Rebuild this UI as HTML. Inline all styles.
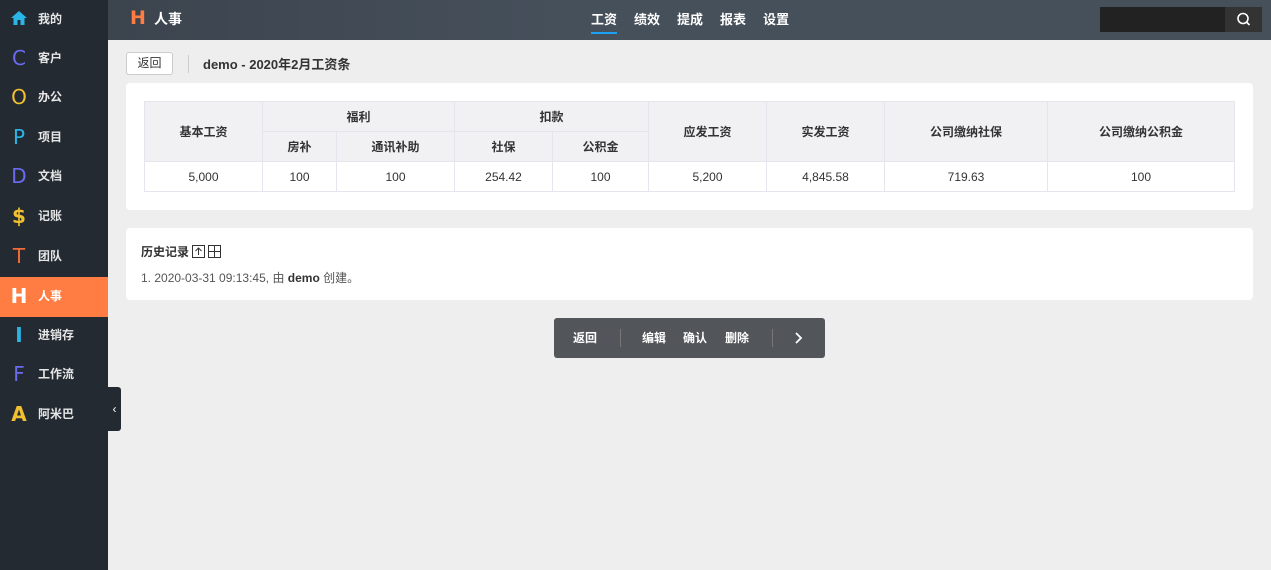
<!DOCTYPE html>
<html><head><meta charset="utf-8"><style>
*{box-sizing:border-box;margin:0;padding:0}
body{width:1271px;height:570px;overflow:hidden;background:#eeeeee;font-family:"Liberation Sans","Noto Sans CJK SC",sans-serif;font-size:12px;color:#333;position:relative}
.side{position:absolute;left:0;top:0;width:108px;height:570px;background:#232a32}
.it{position:absolute;left:0;width:108px;height:40px;display:flex;align-items:center;color:#e6e6e6;font-weight:bold;font-size:12px;padding-bottom:3px}
.it .ic{width:38px;text-align:center;font-size:20px;font-weight:normal;font-family:"DejaVu Sans","Liberation Sans",sans-serif}
.it.act{background:#ff7d42;color:#fff}
.tab{position:absolute;left:108px;top:387px;width:13px;height:44px;background:#232a32;border-radius:0 3px 3px 0;color:#fff;font-size:12px;text-align:center;line-height:44px}
.top{position:absolute;left:108px;top:0;width:1163px;height:40px;background:linear-gradient(90deg,#3c444e,#46505b 40%,#46505b)}
.logo{position:absolute;left:22px;top:7px;color:#ff7d42;font-size:19px;font-family:"DejaVu Sans",sans-serif;font-weight:bold}
.ltxt{position:absolute;left:46px;top:9px;color:#fff;font-size:14px;font-weight:bold}
.nav{position:absolute;left:483px;top:9px;color:#fff;font-weight:bold;font-size:13px}
.nav span{margin-right:17px;display:inline-block;position:relative}
.nav span.on:after{content:"";position:absolute;left:0;right:0;top:23px;height:2px;background:#1da1f2}
.srch{position:absolute;left:992px;top:7px;width:162px;height:25px;background:#222}
.sbtn{position:absolute;left:1117px;top:7px;width:37px;height:25px;background:#333}
.card{position:absolute;left:126px;width:1127px;background:#fff;border-radius:4px}
table{border-collapse:collapse;position:absolute;left:18px;top:18px;width:1091px;font-size:12px}
td,th{border:1px solid #e5e5ee;text-align:center;height:30px}
th{background:#f1f1f4;font-weight:bold;color:#333}
.bar{position:absolute;left:554px;top:318px;width:271px;height:40px;background:#52565b;border-radius:3px;color:#fff;font-weight:bold;font-size:12px}
.bar span{position:absolute;top:11px}
.sep{position:absolute;top:11px;width:1px;height:18px;background:#777}
</style></head><body>
<div class="side">
<div class="it" style="top:0"><span class="ic" style="color:#2bb5e6"><svg width="18" height="16" viewBox="0 0 18 16"><path d="M9 1L1 8h2.5v7h4v-5h3v5h4V8H17z" fill="#2bb5e6"/></svg></span>我的</div>
<div class="it" style="top:39px"><span class="ic" style="color:#6b6bf0">C</span>客户</div>
<div class="it" style="top:78px"><span class="ic" style="color:#f0c030">O</span>办公</div>
<div class="it" style="top:118px"><span class="ic" style="color:#2bb5e6">P</span>项目</div>
<div class="it" style="top:157px"><span class="ic" style="color:#6b6bf0">D</span>文档</div>
<div class="it" style="top:197px"><span class="ic" style="color:#f0c030;font-weight:bold">$</span>记账</div>
<div class="it" style="top:237px"><span class="ic" style="color:#f06a3a">T</span>团队</div>
<div class="it act" style="top:277px"><span class="ic" style="color:#fff;font-weight:bold">H</span>人事</div>
<div class="it" style="top:316px"><span class="ic" style="color:#2bb5e6;font-weight:bold">I</span>进销存</div>
<div class="it" style="top:355px"><span class="ic" style="color:#6b6bf0">F</span>工作流</div>
<div class="it" style="top:395px"><span class="ic" style="color:#f0c030;font-weight:bold">A</span>阿米巴</div>
</div>
<div class="tab">‹</div>
<div class="top">
<div class="logo">H</div><div class="ltxt">人事</div>
<div class="nav"><span class="on">工资</span><span>绩效</span><span>提成</span><span>报表</span><span>设置</span></div>
<div class="srch"></div><div class="sbtn"><svg width="37" height="25"><circle cx="18" cy="11.5" r="5" stroke="#fff" stroke-width="1.6" fill="none"/><path d="M21.5 15l3 3" stroke="#fff" stroke-width="1.6"/></svg></div>
</div>
<div style="position:absolute;left:126px;top:52px;width:47px;height:23px;border:1px solid #ccc;border-radius:3px;background:#fff;text-align:center;line-height:21px;font-size:12px">返回</div>
<div style="position:absolute;left:188px;top:55px;width:1px;height:18px;background:#ccc"></div>
<div style="position:absolute;left:203px;top:54px;font-weight:bold;font-size:13px">demo - 2020年2月工资条</div>
<div class="card" style="top:83px;height:127px">
<table>
<tr><th rowspan="2" style="width:118px">基本工资</th><th colspan="2">福利</th><th colspan="2">扣款</th><th rowspan="2" style="width:118px">应发工资</th><th rowspan="2" style="width:118px">实发工资</th><th rowspan="2" style="width:163px">公司缴纳社保</th><th rowspan="2">公司缴纳公积金</th></tr>
<tr><th style="width:74px">房补</th><th style="width:118px">通讯补助</th><th style="width:98px">社保</th><th style="width:96px">公积金</th></tr>
<tr><td>5,000</td><td>100</td><td>100</td><td>254.42</td><td>100</td><td>5,200</td><td>4,845.58</td><td>719.63</td><td>100</td></tr>
</table>
</div>
<div class="card" style="top:228px;height:72px">
<div style="position:absolute;left:15px;top:15px;font-weight:bold;font-size:12px">历史记录 <svg width="32" height="13" style="vertical-align:-2px"><rect x="0.5" y="0.5" width="12" height="12" fill="none" stroke="#333"/><path d="M6.5 10V3M3.5 6l3-3 3 3" stroke="#333" fill="none"/><rect x="16.5" y="0.5" width="12" height="12" fill="none" stroke="#333"/><path d="M22.5 1v11M17 6.5h11" stroke="#333"/></svg></div>
<div style="position:absolute;left:15px;top:41px;color:#555">1. 2020-03-31 09:13:45, 由 <b style="color:#333">demo</b> 创建。</div>
</div>
<div class="bar">
<span style="left:19px">返回</span><div class="sep" style="left:66px"></div>
<span style="left:88px">编辑</span><span style="left:129px">确认</span><span style="left:171px">删除</span>
<div class="sep" style="left:218px"></div>
<svg style="position:absolute;left:240px;top:14px" width="10" height="12"><path d="M2 1l5 5-5 5" stroke="#fff" stroke-width="1.8" fill="none"/></svg>
</div>
</body></html>
